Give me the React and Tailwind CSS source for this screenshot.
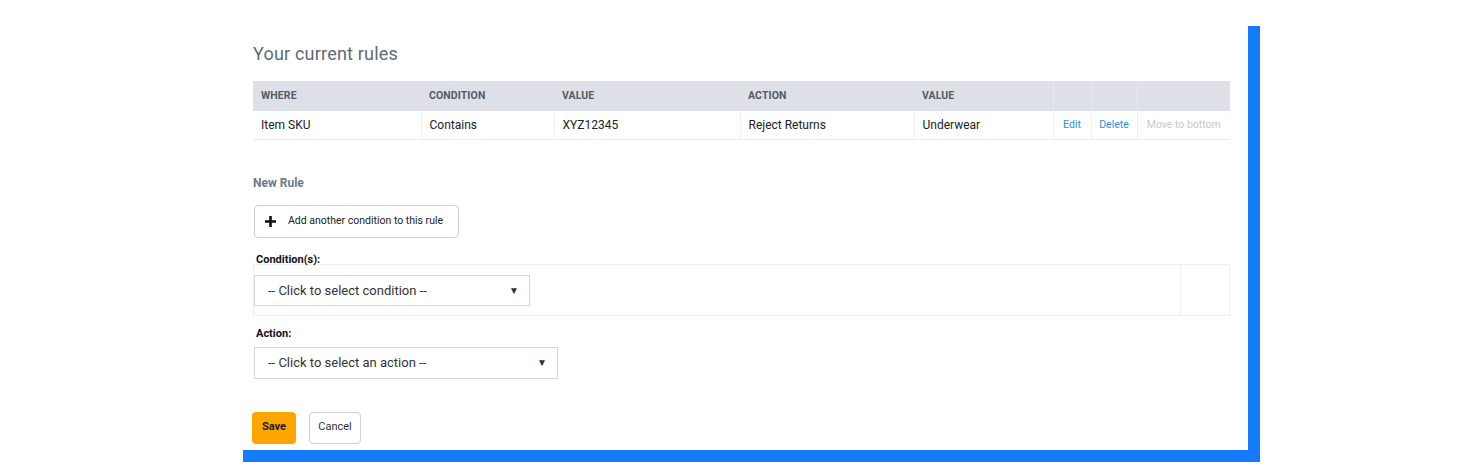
import React from "react";

const cols = [
  { key: "where", label: "WHERE", w: "w-[168px]" },
  { key: "condition", label: "CONDITION", w: "w-[133px]" },
  { key: "value", label: "VALUE", w: "w-[186px]" },
  { key: "action", label: "ACTION", w: "w-[174px]" },
  { key: "value2", label: "VALUE", w: "w-[139px]" },
];

const rules = [
  { where: "Item SKU", condition: "Contains", value: "XYZ12345", action: "Reject Returns", value2: "Underwear" },
];

function FakeSelect({ label, width }) {
  return (
    <div className={`${width} h-[31px] border border-[#d6d6d6] bg-white flex items-center justify-between pl-[13px] pr-[10px] text-[13px] text-[#333]`}>
      <span>{label}</span>
      <span className="text-[10px] text-[#333]">▼</span>
    </div>
  );
}

export default function App() {
  return (
    <div className="w-full min-h-[475px] bg-white pt-[14px]" style={{ fontFamily: "Roboto, 'Liberation Sans', sans-serif" }}>
      <div className="mx-auto w-[1017px] h-[436px] bg-white shadow-[12px_12px_0_0_#147bff] pl-[22px] pr-[18px]">
        {/* current rules */}
        <h2 className="pt-[29px] text-[18px] leading-[22px] text-[#5d6b79] tracking-[0.2px]">Your current rules</h2>

        <table className="mt-[16px] w-[977px] border-collapse text-left">
          <thead>
            <tr className="bg-[#dde1e7] h-[30px]">
              {cols.map((c) => (
                <th key={c.key} className={`${c.w} pl-[8px] text-[10.5px] font-bold text-[#555b62] tracking-[0.1px]`}>{c.label}</th>
              ))}
              <th className="w-[38px] border-l border-[#e6e9ed]"></th>
              <th className="w-[46px] border-l border-[#e6e9ed]"></th>
              <th className="border-l border-[#e6e9ed]"></th>
            </tr>
          </thead>
          <tbody>
            {rules.map((r, i) => (
              <tr key={i} className="h-[28px] border-b border-[#ececec] text-[12px] text-[#222]">
                {cols.map((c, j) => (
                  <td key={c.key} className={`pl-[8px] ${j > 0 ? "border-l border-[#efefef]" : ""}`}>{r[c.key]}</td>
                ))}
                <td className="border-l border-[#efefef] text-center text-[10.5px] text-[#2e8fe0]">Edit</td>
                <td className="border-l border-[#efefef] text-center text-[10.5px] text-[#2e8fe0]">Delete</td>
                <td className="border-l border-[#efefef] text-center text-[10.5px] text-[#c8c8c8]">Move to bottom</td>
              </tr>
            ))}
          </tbody>
        </table>

        {/* new rule */}
        <div className="mt-[34px] text-[12px] font-bold text-[#6b7a89]">New Rule</div>

        <button className="mt-[13px] ml-[1px] h-[33px] w-[205px] flex items-center rounded-[4px] border border-[#cfcfcf] bg-white pl-[10px] text-[10.5px] text-[#222]">
          <svg width="11" height="11" viewBox="0 0 11 11" className="mr-[12px]">
            <path d="M4.2 0h2.6v4.2H11v2.6H6.8V11H4.2V6.8H0V4.2h4.2z" fill="#111" />
          </svg>
          Add another condition to this rule
        </button>

        <div className="mt-[15px] pl-[3px] text-[11px] font-bold text-[#111] leading-[14px]">Condition(s):</div>
        <div className="-mt-[3px] flex h-[52px] border border-[#efefef]">
          <div className="flex-1 flex items-center pt-[2px] border-r border-[#efefef]">
            <FakeSelect label="-- Click to select condition --" width="w-[276px]" />
          </div>
          <div className="w-[48px]"></div>
        </div>

        <div className="mt-[11px] pl-[3px] text-[11px] font-bold text-[#111] leading-[14px]">Action:</div>
        <div className="mt-[6px] ml-[1px] [&>div]:h-[32px]">
          <FakeSelect label="-- Click to select an action --" width="w-[304px]" />
        </div>

        <div className="mt-[33px] flex gap-[13px]">
          <button className="-ml-[1px] h-[32px] w-[44px] rounded-[4px] bg-[#ffa500] text-[11px] font-bold text-[#1a1a1a]">Save</button>
          <button className="h-[32px] w-[52px] rounded-[4px] border border-[#d0d0d0] bg-white text-[11px] text-[#333]">Cancel</button>
        </div>
      </div>
    </div>
  );
}
